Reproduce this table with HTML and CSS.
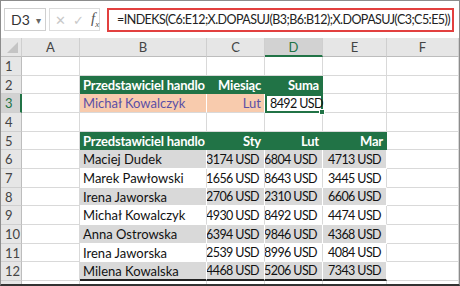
FILE: index.html
```html
<!DOCTYPE html>
<html lang="pl">
<head>
<meta charset="utf-8">
<link rel="stylesheet" href="styles.css">
</head>
<body>
<div class="frame">
  <div class="fbar">
    <div class="namebox"><span>D3</span><span class="caret">&#9662;</span></div>
    <div class="fxbox"><span class="ic">&#10005;</span><span class="ic">&#10003;</span><span class="fx">f<sub>x</sub></span></div>
    <div class="formula">=INDEKS(C6:E12;X.DOPASUJ(B3;B6:B12);X.DOPASUJ(C3;C5:E5))</div>
  </div>
  <div class="sheet">
    <div class="ch corner"><span class="tri"></span></div><div class="ch">A</div><div class="ch">B</div><div class="ch">C</div><div class="ch sel">D</div><div class="ch">E</div><div class="ch">F</div>

    <div class="rh">1</div><div class="c"></div><div class="c"></div><div class="c"></div><div class="c"></div><div class="c"></div><div class="c"></div>

    <div class="rh">2</div><div class="c"></div><div class="c g">Przedstawiciel handlo</div><div class="c g r">Miesiąc</div><div class="c g r">Suma</div><div class="c"></div><div class="c"></div>

    <div class="rh rsel">3</div><div class="c"></div><div class="c o">Michał Kowalczyk</div><div class="c o r">Lut</div><div class="c active n">8492 USD<span class="handle"></span></div><div class="c"></div><div class="c"></div>

    <div class="rh">4</div><div class="c"></div><div class="c"></div><div class="c"></div><div class="c"></div><div class="c"></div><div class="c"></div>

    <div class="rh">5</div><div class="c"></div><div class="c g">Przedstawiciel handlo</div><div class="c g r">Sty</div><div class="c g r">Lut</div><div class="c g r">Mar</div><div class="c"></div>

    <div class="rh">6</div><div class="c"></div><div class="c b">Maciej Dudek</div><div class="c b r n">3174 USD</div><div class="c b r n">6804 USD</div><div class="c b r n">4713 USD</div><div class="c"></div>

    <div class="rh">7</div><div class="c"></div><div class="c w">Marek Pawłowski</div><div class="c w r n">1656 USD</div><div class="c w r n">8643 USD</div><div class="c w r n">3445 USD</div><div class="c"></div>

    <div class="rh">8</div><div class="c"></div><div class="c b">Irena Jaworska</div><div class="c b r n">2706 USD</div><div class="c b r n">2310 USD</div><div class="c b r n">6606 USD</div><div class="c"></div>

    <div class="rh">9</div><div class="c"></div><div class="c w">Michał Kowalczyk</div><div class="c w r n">4930 USD</div><div class="c w r n">8492 USD</div><div class="c w r n">4474 USD</div><div class="c"></div>

    <div class="rh">10</div><div class="c"></div><div class="c b">Anna Ostrowska</div><div class="c b r n">6394 USD</div><div class="c b r n">9846 USD</div><div class="c b r n">4368 USD</div><div class="c"></div>

    <div class="rh">11</div><div class="c"></div><div class="c w">Irena Jaworska</div><div class="c w r n">2539 USD</div><div class="c w r n">8996 USD</div><div class="c w r n">4084 USD</div><div class="c"></div>

    <div class="rh">12</div><div class="c"></div><div class="c b last">Milena Kowalska</div><div class="c b r n last">4468 USD</div><div class="c b r n last">5206 USD</div><div class="c b r n last">7343 USD</div><div class="c"></div>

    <div class="rh"></div><div class="c"></div><div class="c"></div><div class="c"></div><div class="c"></div><div class="c"></div><div class="c"></div>
  </div>
</div>
</body>
</html>
```

FILE: styles.css
```css
* { box-sizing: border-box; }
html, body { margin: 0; padding: 0; }
body { width: 460px; height: 286px; overflow: hidden; background: #fff; font-family: Lato, "Open Sans", sans-serif; }

.frame {
  width: 460px;
  height: 286px;
  border: 1px solid #8c8c8c;
  border-bottom: 2px solid #333;
  overflow: hidden;
  display: flex;
  flex-direction: column;
}

.fbar {
  height: 37px;
  flex: none;
  display: flex;
  align-items: center;
  padding: 0 5px 0 3px;
  background: #fff;
}
.namebox {
  width: 42px;
  height: 23px;
  border: 1px solid #cfcfcf;
  display: flex;
  align-items: center;
  justify-content: space-between;
  padding: 0 4px 0 6px;
  font-size: 14px;
  color: #333;
}
.caret { font-size: 10px; color: #666; }
.fxbox {
  margin-left: 3px;
  width: 51px;
  height: 23px;
  border: 1px solid #dcdcdc;
  display: flex;
  align-items: center;
  padding-left: 5px;
  gap: 7px;
}
.ic { color: #c8c8c8; font-size: 13px; }
.fx { font-family: "Liberation Serif", serif; font-style: italic; font-size: 15px; color: #555; }
.fx sub { font-size: 9px; }
.formula {
  margin-left: 7px;
  flex: 1;
  height: 24px;
  border: 2px solid #e2403f;
  display: flex;
  align-items: center;
  padding-left: 8px;
  font-size: 12.5px;
  letter-spacing: -0.55px;
  color: #222;
  white-space: nowrap;
  overflow: hidden;
}

.sheet {
  flex: 1;
  display: grid;
  grid-template-columns: 21px 58px 127px 58px 58px 64px 1fr;
  grid-template-rows: 19px 19px 18px 19px 19px 18px 19px 19px 18px 19px 19px 18px 19px 20px;
  font-size: 13px;
}

.ch {
  background: #e6e6e6;
  border-right: 1px solid #cfcfcf;
  border-bottom: 1px solid #bdbdbd;
  display: flex;
  align-items: center;
  justify-content: center;
  font-size: 13px;
  color: #444;
}
.ch.sel { background: #d2d2d2; border-bottom: 2px solid #217346; color: #217346; }
.corner { position: relative; }
.tri {
  position: absolute;
  right: 3px;
  bottom: 3px;
  width: 0;
  height: 0;
  border-left: 11px solid transparent;
  border-bottom: 11px solid #c4c4c4;
}
.rh {
  background: #e6e6e6;
  border-right: 1px solid #bdbdbd;
  border-bottom: 1px solid #cfcfcf;
  display: flex;
  align-items: center;
  padding-left: 4px;
  font-size: 13px;
  color: #444;
}
.rh.rsel { background: #d2d2d2; border-right: 2px solid #217346; color: #217346; }

.c {
  border-right: 1px solid #d9d9d9;
  border-bottom: 1px solid #d9d9d9;
  display: flex;
  align-items: center;
  padding: 0 3px;
  white-space: nowrap;
  overflow: hidden;
  color: #111;
}
.c.r { justify-content: flex-end; }
.c.n { font-size: 12.5px; letter-spacing: -0.6px; padding-right: 5px; }
.c.g { background: #217346; color: #fff; border-color: #217346; font-weight: 700; letter-spacing: -0.2px; }
.c.o { background: #f8cbad; color: #5b4fa6; border-right-color: #fff; }
.c.active { border: 2px solid #217346; position: relative; padding-left: 3px; overflow: visible; }
.handle { position: absolute; right: -4px; bottom: -4px; width: 6px; height: 6px; background: #217346; border: 1px solid #fff; }
.c.b { background: #d9d9d9; border-right-color: #fff; border-bottom-color: #fff; }
.c.w { background: #fff; border-right-color: #d9d9d9; border-bottom-color: #fff; }
.c.last { border-bottom: 2px solid #222; }
```
